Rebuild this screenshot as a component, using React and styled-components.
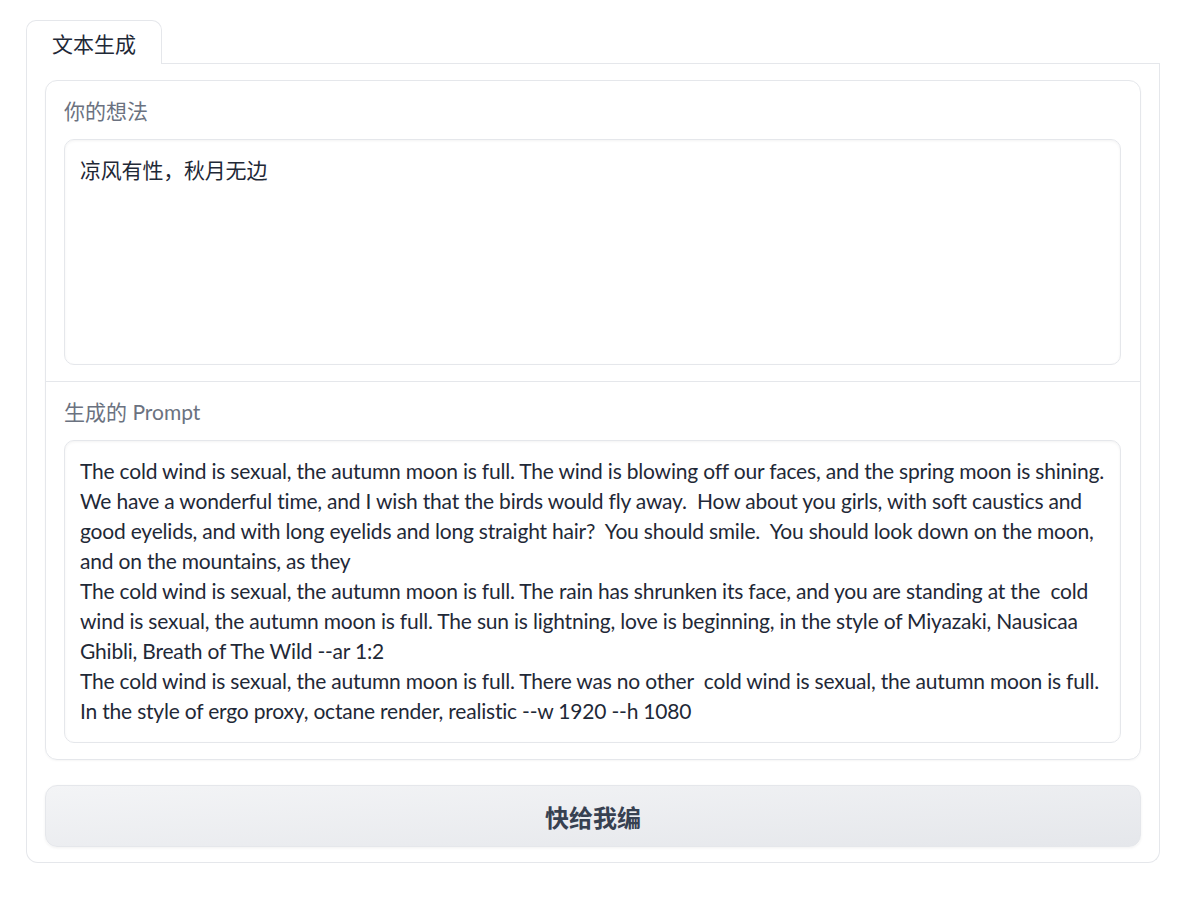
import React from 'react'
import styled, { createGlobalStyle } from 'styled-components'

const GlobalStyle = createGlobalStyle`
    body{
        margin:0;
        background:#ffffff;
        font-family:Lato, "Noto Sans CJK SC", sans-serif;
        color:#1f2937;
    }
`

const promptLines = [
    'The cold wind is sexual, the autumn moon is full. The wind is blowing off our faces, and the spring moon is shining.',
    'We have a wonderful time, and I wish that the birds would fly away.  How about you girls, with soft caustics and',
    'good eyelids, and with long eyelids and long straight hair?  You should smile.  You should look down on the moon,',
    'and on the mountains, as they',
    'The cold wind is sexual, the autumn moon is full. The rain has shrunken its face, and you are standing at the  cold',
    'wind is sexual, the autumn moon is full. The sun is lightning, love is beginning, in the style of Miyazaki, Nausicaa',
    'Ghibli, Breath of The Wild --ar 1:2',
    'The cold wind is sexual, the autumn moon is full. There was no other  cold wind is sexual, the autumn moon is full.',
    'In the style of ergo proxy, octane render, realistic --w 1920 --h 1080',
]

const App = () => {
    return (
        <Page>
            <GlobalStyle />
            <TabNav>
                <TabButton>文本生成</TabButton>
            </TabNav>
            <TabPanel>
                <Form>
                    <Field>
                        <Label>你的想法</Label>
                        <TextBox $height={226}>
                            <Line>凉风有性，秋月无边</Line>
                        </TextBox>
                    </Field>
                    <Field $divider>
                        <Label>生成的 Prompt</Label>
                        <TextBox $height={303}>
                            {promptLines.map((l, i) => (
                                <Line key={i}>{l}</Line>
                            ))}
                        </TextBox>
                    </Field>
                </Form>
                <Button>快给我编</Button>
            </TabPanel>
        </Page>
    )
}

const Page = styled.div`
    width:1134px;
    padding:20px 0 0 26px;
`

const TabNav = styled.div`
    display:flex;
    border-bottom:1px solid #e5e7eb;
`

const TabButton = styled.div`
    box-sizing:border-box;
    width:136px;
    height:44px;
    margin-bottom:-1px;
    padding:0 0 0 25px;
    display:flex;
    align-items:center;
    border:1px solid #e5e7eb;
    border-bottom:none;
    border-radius:10px 10px 0 0;
    background:#ffffff;
    font-family:"Noto Sans CJK SC", sans-serif;
    font-size:21px;
    color:#1f2937;
`

const TabPanel = styled.div`
    display:flex;
    flex-direction:column;
    gap:25px;
    padding:16px 18px 15px 18px;
    border:1px solid #e5e7eb;
    border-top:none;
    border-radius:0 0 12px 12px;
`

const Form = styled.div`
    display:flex;
    flex-direction:column;
    border:1px solid #e5e7eb;
    border-radius:12px;
    box-shadow:0 1px 2px rgba(0,0,0,.04);
    overflow:hidden;
`

const Field = styled.div`
    display:flex;
    flex-direction:column;
    gap:14px;
    padding:16px 19px 16px 18px;
    border-top:${({ $divider }) => ($divider ? '1px solid #e5e7eb' : 'none')};
`

const Label = styled.div`
    font-family:Lato, "Noto Sans CJK SC", sans-serif;
    font-size:21px;
    line-height:28px;
    color:#6b7280;
`

const TextBox = styled.div`
    box-sizing:border-box;
    height:${({ $height }) => $height}px;
    padding:15px 15px;
    border:1px solid #e5e7eb;
    border-radius:10px;
    box-shadow:inset 0 1px 3px rgba(0,0,0,.05);
    font-family:Lato, "Noto Sans CJK SC", sans-serif;
    font-size:21px;
    letter-spacing:-0.2px;
    line-height:30px;
    color:#1f2937;
`

const Line = styled.div`
    white-space:pre;
`

const Button = styled.button`
    height:62px;
    border:1px solid #e5e7eb;
    border-radius:12px;
    background:linear-gradient(to bottom right, #f3f4f6, #e5e7eb);
    box-shadow:0 1px 3px rgba(0,0,0,.06);
    font-family:"Noto Sans CJK SC", sans-serif;
    font-weight:700;
    font-size:24px;
    color:#374151;
    cursor:pointer;
`

export default App
